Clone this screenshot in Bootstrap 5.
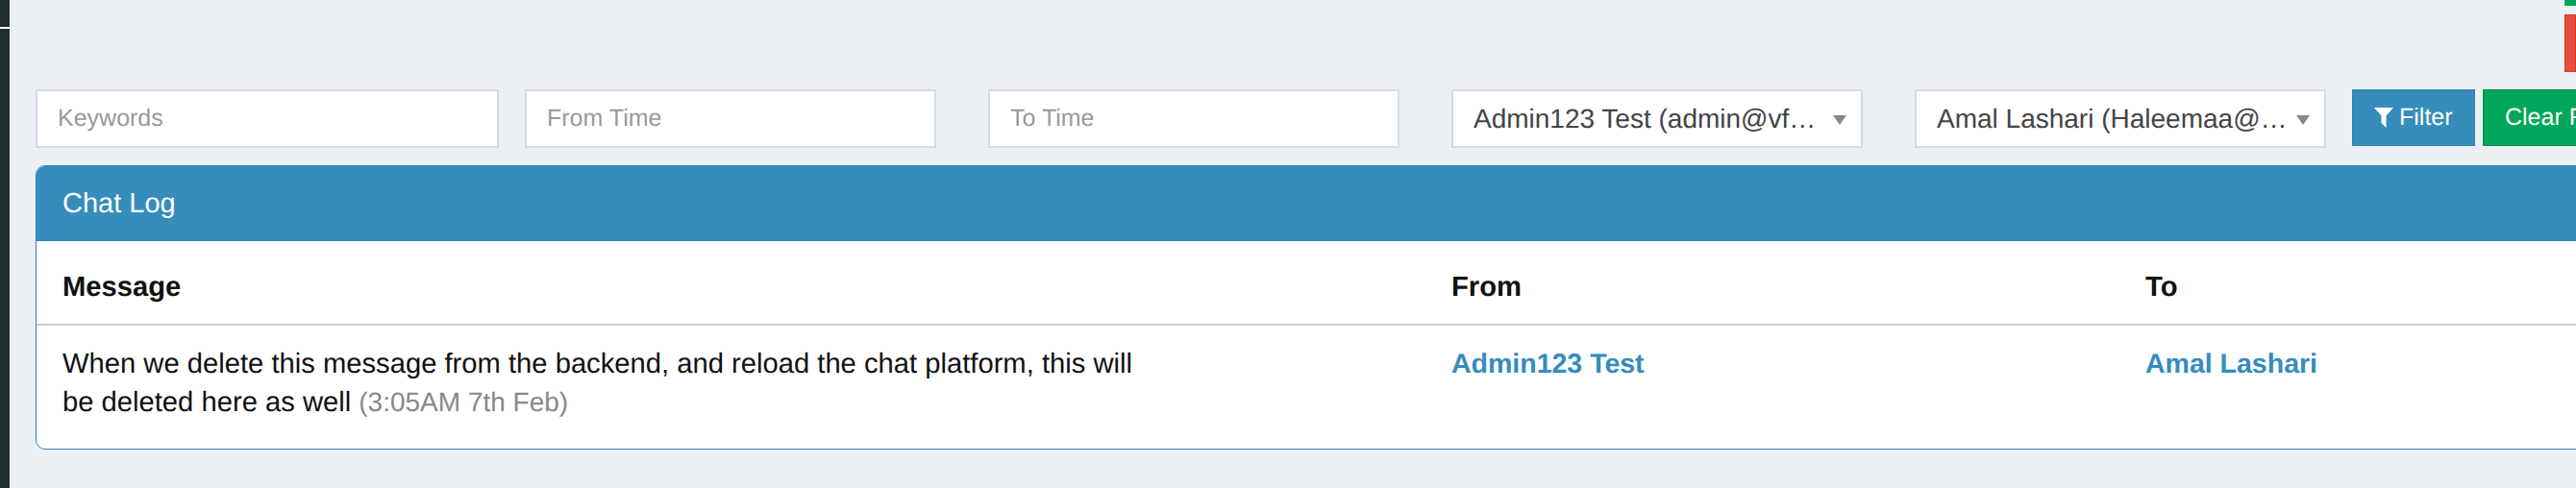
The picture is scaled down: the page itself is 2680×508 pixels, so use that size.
<!DOCTYPE html>
<html lang="en">
<head>
<meta charset="utf-8">
<title>Chat Log</title>
<link href="https://cdn.jsdelivr.net/npm/bootstrap@5.3.0/dist/css/bootstrap.min.css" rel="stylesheet">
<style>
html, body { height: 100%; }
body { background: #ecf0f5; font-family: "Liberation Sans", Arial, sans-serif; font-size: 28px; color: #111; overflow: hidden; text-rendering: geometricPrecision; }
.page-shell { width: 2680px; height: 508px; overflow: hidden; }
.side-strip { width: 10px; background: #222d32; flex: none; }
.side-rule { height: 2px; margin-top: 28px; background: #fff; }
.main-pane { width: 2670px; padding: 0 0 0 27px; flex: none; }
.top-stack { width: 12px; margin-left: 2631px; height: 75px; margin-bottom: 18px; }
.top-green { height: 6px; background: #00a65a; }
.top-red { height: 60px; margin-top: 9px; background: #e74c3c; border: 1px solid #d73925; }
.filter-row { height: 61px; width: 2700px; }
.field-box { height: 61px; border: 2px solid #d6dae3; background: #fff; border-radius: 0; font-size: 25px; padding: 0 21px; color: #333; box-shadow: none; flex: none; text-rendering: geometricPrecision; }
.field-box::placeholder { color: #999; opacity: 1; }
.w-key { width: 482px; margin-right: 27px; }
.w-from { width: 428px; margin-right: 54px; }
.w-std { width: 428px; margin-right: 54px; }
.pick-box { display: flex; align-items: center; justify-content: space-between; padding: 0 15px 0 21px; font-size: 28px; color: #444; }
.pick-text { white-space: nowrap; overflow: hidden; }
.pick-arrow { width: 0; height: 0; border-left: 7px solid transparent; border-right: 7px solid transparent; border-top: 10px solid #888; flex: none; margin-top: 3px; }
.btn-shot { height: 59px; border-radius: 0; font-size: 25px; color: #fff; padding: 0 22px; flex: none; white-space: nowrap; display: flex; align-items: center; gap: 6px; text-rendering: geometricPrecision; }
.btn-filter { width: 128px; background: #368cbb; border: 1px solid #367fa9; margin-left: -27px; margin-right: 8px; }
.btn-clear { width: 200px; background: #00a65a; border: 1px solid #008d4c; }
.btn-glyph { flex: none; }
.log-panel { margin-top: 18px; width: 2700px; height: 296px; border: 1px solid #2c82c4; border-radius: 10px 0 0 10px; background: #fff; overflow: hidden; }
.log-head { height: 78px; background: #368cbb; color: #fff; font-size: 29px; padding: 3px 0 0 27px; display: flex; align-items: center; border-bottom: 1px solid #2c82c4; }
.log-table { table-layout: fixed; width: 2700px; margin: 0; color: #111; font-size: 29.2px; line-height: 40px; }
.log-table th, .log-table td { padding: 0 27px; border: 0; vertical-align: top; }
.log-table thead th { height: 87px; padding-top: 10px; vertical-align: middle; border-bottom: 2px solid #ccc; font-weight: 700; }
.log-table tbody td { padding-top: 20px; }
.msg-text { max-width: 1125px; }
.msg-time { color: #888; font-size: 28px; }
.who-link { color: #368cbb; font-weight: 700; font-size: 28.5px; text-decoration: none; }
.c-msg { width: 1445px; } .c-from { width: 722px; }
</style>
</head>
<body>
<div class="page-shell d-flex">
  <div class="side-strip"><div class="side-rule"></div></div>
  <div class="main-pane">
    <div class="top-stack"><div class="top-green"></div><div class="top-red"></div></div>
    <div class="filter-row d-flex">
      <input class="form-control field-box w-key" placeholder="Keywords">
      <input class="form-control field-box w-from" placeholder="From Time">
      <input class="form-control field-box w-std" placeholder="To Time">
      <div class="field-box pick-box w-std"><span class="pick-text">Admin123 Test (admin@vf…</span><span class="pick-arrow"></span></div>
      <div class="field-box pick-box w-std"><span class="pick-text">Amal Lashari (Haleemaa@…</span><span class="pick-arrow"></span></div>
      <button class="btn btn-shot btn-filter" type="button"><svg class="btn-glyph" width="20" height="21" viewBox="0 0 20 21"><path fill="#fff" d="M0 0h20L12.500 8.500V21L7.500 16V8.500z"/></svg>Filter</button>
      <button class="btn btn-shot btn-clear" type="button">Clear Filter</button>
    </div>
    <div class="log-panel">
      <div class="log-head">Chat Log</div>
      <table class="table log-table">
        <colgroup><col class="c-msg"><col class="c-from"><col></colgroup>
        <thead><tr><th>Message</th><th>From</th><th>To</th></tr></thead>
        <tbody><tr>
          <td><div class="msg-text">When we delete this message from the backend, and reload the chat platform, this will be deleted here as well <span class="msg-time">(3:05AM 7th Feb)</span></div></td>
          <td><a class="who-link" href="#">Admin123 Test</a></td>
          <td><a class="who-link" href="#">Amal Lashari</a></td>
        </tr></tbody>
      </table>
    </div>
  </div>
</div>
<script src="https://cdn.jsdelivr.net/npm/bootstrap@5.3.0/dist/js/bootstrap.bundle.min.js"></script>
</body>
</html>
